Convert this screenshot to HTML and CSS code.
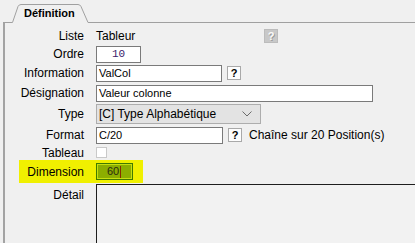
FILE: index.html
```html
<!DOCTYPE html>
<html lang="fr">
<head>
<meta charset="utf-8">
<link rel="stylesheet" href="styles.css">
</head>
<body>
<div class="screen">
  <div class="tabbar">
    <svg class="tabline" width="415" height="23" viewBox="0 0 415 23">
      <path d="M3 22.5 H12.5 L18 6.5 Q19 4.5 21 4.5 H78 Q80 4.5 81 6.5 L88 22.5 H415" fill="none" stroke="#a0a0a0" stroke-width="1"/>
    </svg>
    <span class="tabtitle">Définition</span>
  </div>
  <div class="panel">
    <div class="row r-liste">
      <span class="lbl">Liste</span>
      <span class="val">Tableur</span>
      <span class="qbtn disabled">?</span>
    </div>
    <div class="row r-ordre">
      <span class="lbl">Ordre</span>
      <span class="input ordre">10</span>
    </div>
    <div class="row r-info">
      <span class="lbl">Information</span>
      <span class="input info">ValCol</span>
      <span class="qbtn">?</span>
    </div>
    <div class="row r-desig">
      <span class="lbl">Désignation</span>
      <span class="input desig">Valeur colonne</span>
    </div>
    <div class="row r-type">
      <span class="lbl">Type</span>
      <span class="select">
        <span class="seltext">[C] Type Alphabétique</span>
        <svg class="chev" width="10" height="6" viewBox="0 0 10 6"><polyline points="0.5,0.5 5,5 9.5,0.5" fill="none" stroke="#6b6b6b" stroke-width="1"/></svg>
      </span>
    </div>
    <div class="row r-format">
      <span class="lbl">Format</span>
      <span class="input format">C/20</span>
      <span class="qbtn">?</span>
      <span class="hint">Chaîne sur 20 Position(s)</span>
    </div>
    <div class="row r-tableau">
      <span class="lbl">Tableau</span>
      <span class="check"></span>
    </div>
    <div class="row r-dim">
      <span class="lbl">Dimension</span>
      <span class="input dim"><span class="dimtext">60</span><span class="caret"></span></span>
    </div>
    <div class="row r-detail">
      <span class="lbl">Détail</span>
      <span class="detailbox"></span>
    </div>
  </div>
</div>
</body>
</html>
```

FILE: styles.css
```css
html, body {
  margin: 0;
  padding: 0;
  background: #f0f0f0;
}
.screen {
  width: 415px;
  height: 243px;
  overflow: hidden;
  background: #f0f0f0;
  font-family: "Liberation Sans Narrow", "Liberation Sans", Arial, sans-serif;
  font-size: 12px;
  color: #000;
}
.tabbar {
  position: relative;
  height: 23px;
}
.tabline {
  position: absolute;
  left: 0;
  top: 0;
}
.tabtitle {
  position: relative;
  display: block;
  padding: 7px 0 0 24px;
  line-height: 13px;
  font-family: "Liberation Sans", Arial, sans-serif;
  font-weight: bold;
  font-size: 11px;
}
.panel {
  margin-left: 3px;
  border-left: 2px solid #a3a3a3;
  padding-top: 4px;
  height: 216px;
}
.row {
  display: flex;
  align-items: center;
}
.lbl {
  width: 79px;
  margin-right: 12px;
  text-align: right;
  flex: none;
  line-height: 14px;
}
.r-liste { height: 18px; }
.r-ordre { height: 18px; }
.r-info { height: 20px; }
.r-desig { height: 20px; }
.r-type { height: 22px; }
.r-format { height: 20px; }
.r-tableau { height: 15px; }
.r-dim { height: 23px; }
.val {
  width: 168px;
}
.input {
  box-sizing: border-box;
  height: 17px;
  border: 1px solid #7a7a7a;
  background: #fff;
  font-family: "Liberation Sans", Arial, sans-serif;
  font-size: 11px;
  line-height: 15px;
  padding-left: 2px;
  flex: none;
}
.ordre {
  width: 45px;
  text-align: center;
  padding-left: 0;
  font-family: "Liberation Mono", "DejaVu Sans Mono", monospace;
  font-size: 11px;
  color: #3a1a6a;
}
.info { width: 126px; }
.desig { width: 277px; }
.format { width: 127px; }
.qbtn {
  box-sizing: border-box;
  width: 14px;
  height: 14px;
  margin-left: 5px;
  border: 1px solid #a9a9a9;
  background: #fdfdfd;
  font-family: "Liberation Sans", Arial, sans-serif;
  font-weight: bold;
  font-size: 11px;
  line-height: 12px;
  text-align: center;
  flex: none;
}
.qbtn.disabled {
  margin-left: 0;
  background: #c8c8c8;
  border-color: #bcbcbc;
  color: #fafafa;
  text-shadow: 1px 1px 0 #9a9a9a;
}
.select {
  box-sizing: border-box;
  width: 165px;
  height: 20px;
  border: 1px solid #adadad;
  background: #e3e3e3;
  display: flex;
  align-items: center;
  padding: 0 8px 0 2px;
  flex: none;
}
.seltext {
  flex: 1;
}
.chev {
  display: block;
}
.hint {
  margin-left: 7px;
}
.check {
  box-sizing: border-box;
  width: 11px;
  height: 11px;
  border: 1px solid #c9c9c9;
  background: #fff;
  flex: none;
}
.r-dim {
  margin-left: 14px;
  width: 124px;
  background: #f0f000;
}
.r-dim .lbl {
  width: 65px;
}
.dim {
  width: 37px;
  height: 17px;
  border: 1px solid #3f7a00;
  box-shadow: inset 0 0 0 1px #c6df10;
  background: #8cae00;
  color: #2a2a10;
  display: flex;
  align-items: center;
  justify-content: flex-start;
  padding: 0 0 0 10px;
}
.caret {
  width: 1px;
  height: 12px;
  background: #8a2a00;
  margin-left: 1px;
}
.r-detail {
  margin-top: 1px;
  align-items: flex-start;
}
.r-detail .lbl {
  padding-top: 4px;
}
.detailbox {
  box-sizing: border-box;
  width: 330px;
  height: 70px;
  border: 1px solid #1e1e1e;
  border-right: none;
  border-bottom: none;
  background: #f2f2f2;
  flex: none;
}
```
